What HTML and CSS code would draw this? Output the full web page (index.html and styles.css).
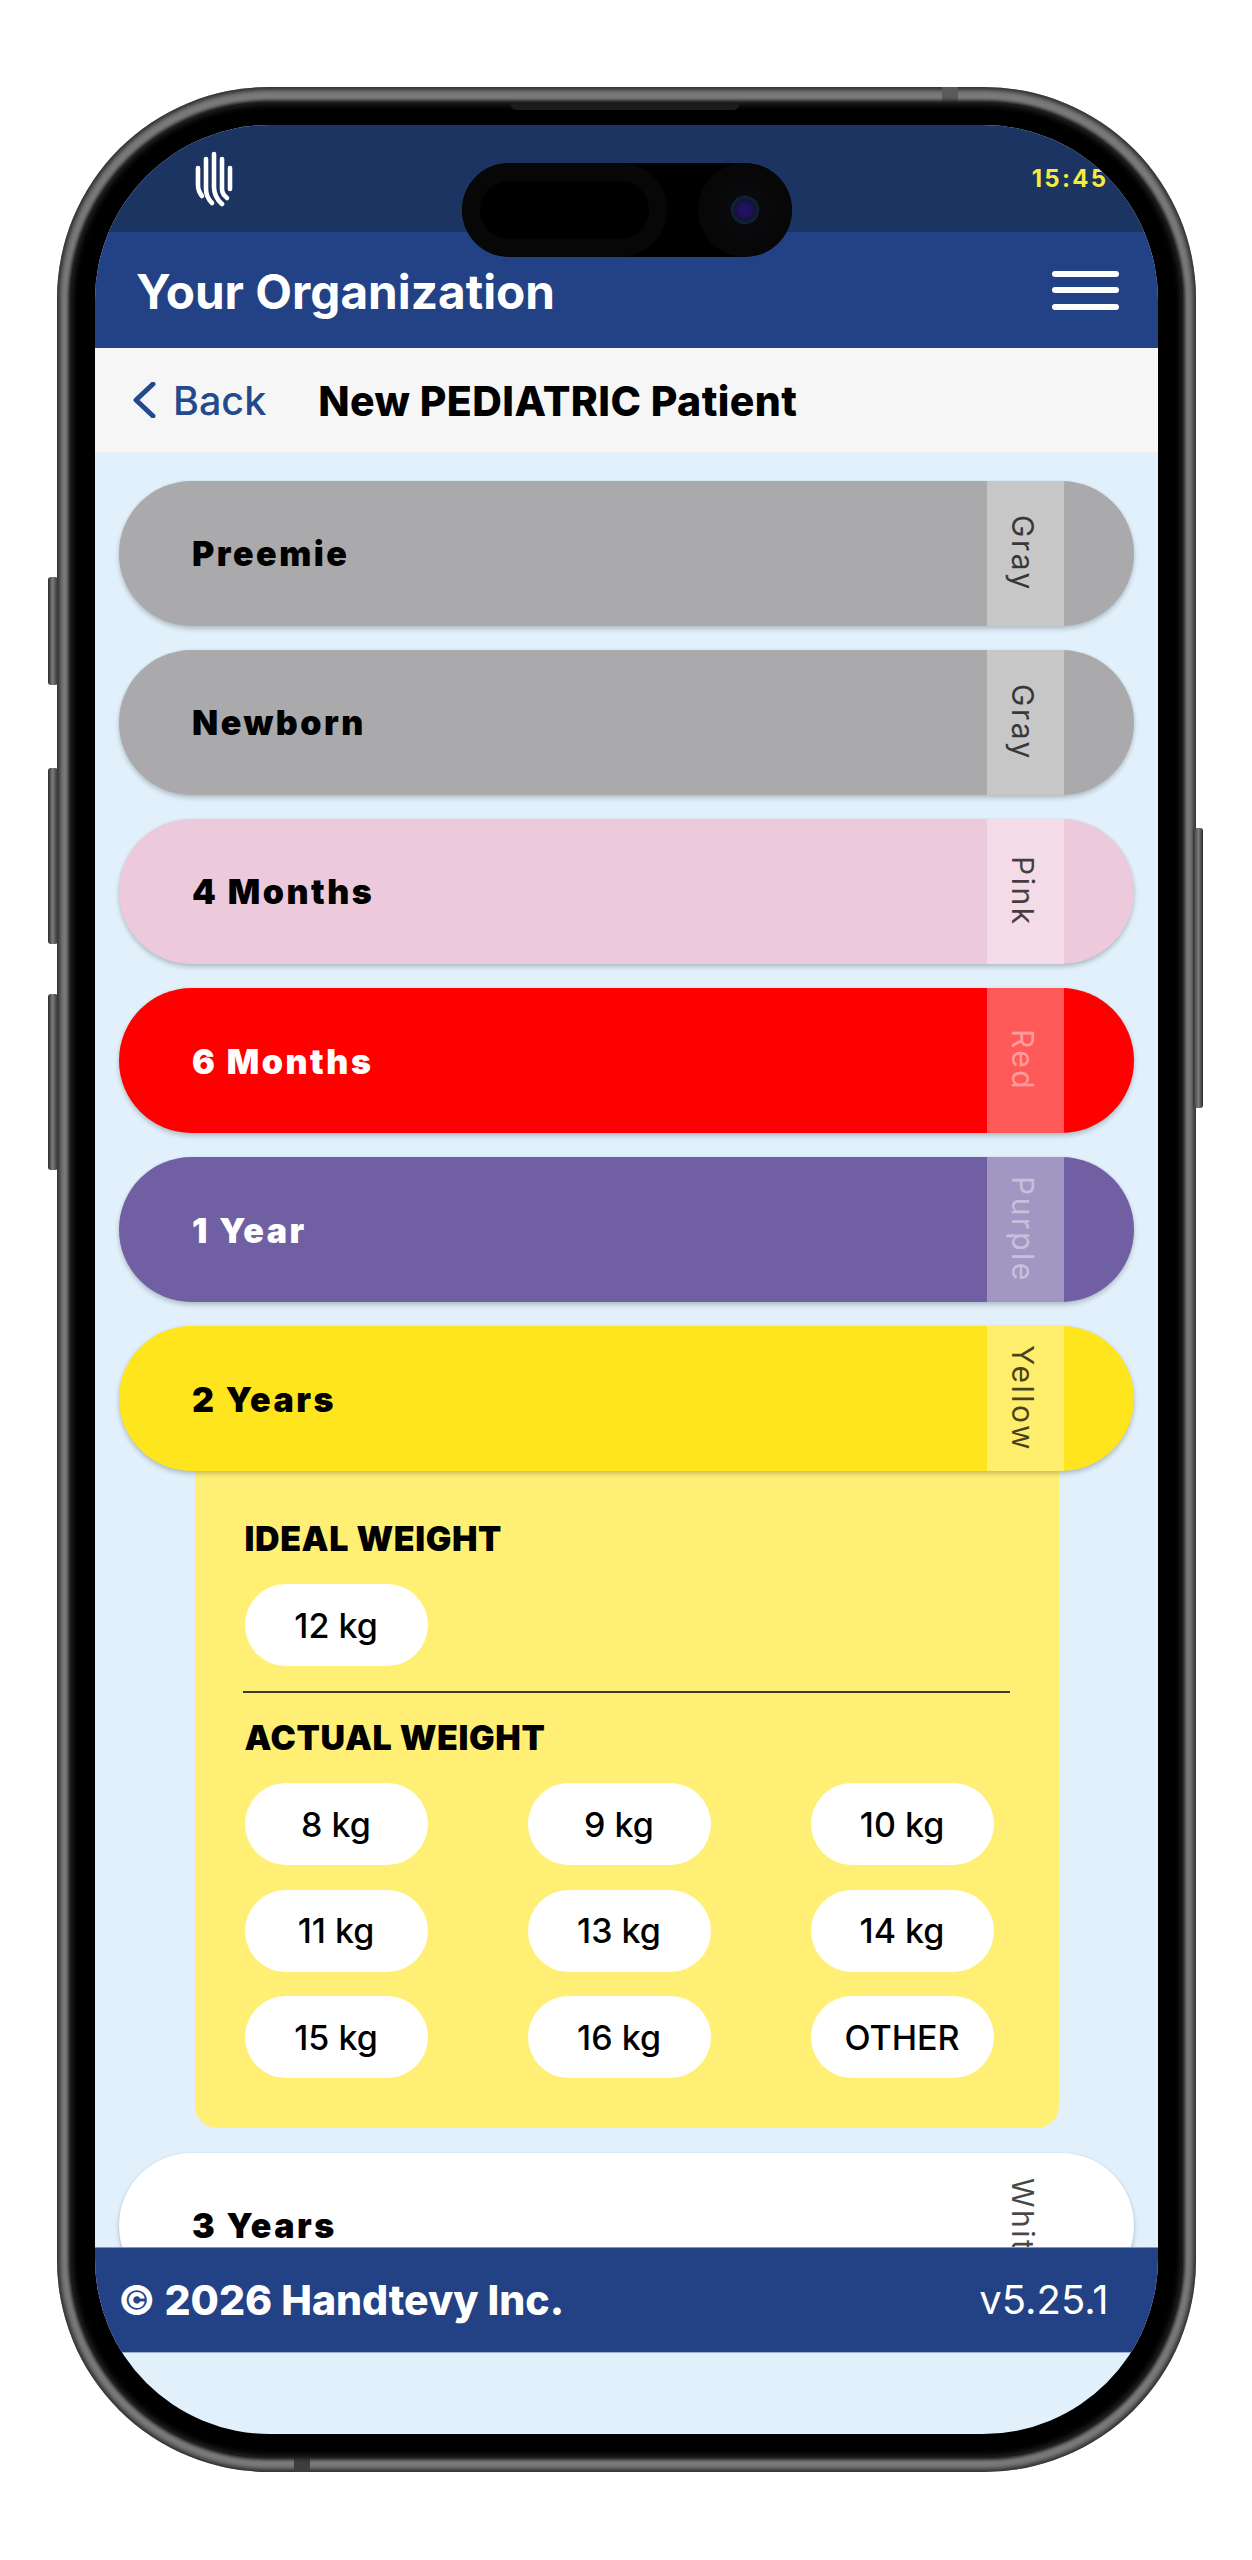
FILE: index.html
```html
<!DOCTYPE html>
<html lang="en">
<head>
<meta charset="utf-8">
<title>Your Organization</title>
<link rel="stylesheet" href="styles.css">
</head>
<body>
<div class="phone">
  <span class="side-btn left b1"></span>
  <span class="side-btn left b2"></span>
  <span class="side-btn left b3"></span>
  <span class="side-btn right b4"></span>
  <span class="band band-top"></span>
  <span class="band band-bottom"></span>
  <div class="bezel">
    <span class="speaker"></span>
    <div class="screen">
      <div class="status">
        <svg class="logo" viewBox="0 0 38 56" aria-hidden="true">
          <g fill="none" stroke="#fff" stroke-width="4.6" stroke-linecap="round">
            <path d="M3 17V34Q3 40 7 45"/>
            <path d="M11 8V38Q11 46 17 52"/>
            <path d="M19 3V36Q19 46 27 53"/>
            <path d="M27 8V38Q27 43 32 47"/>
            <path d="M35 17V38"/>
          </g>
        </svg>
        <span class="time">15:45</span>
      </div>
      <header class="app-head">
        <span class="org">Your Organization</span>
        <span class="burger"><i></i><i></i><i></i></span>
      </header>
      <div class="subbar">
        <svg class="chev" viewBox="0 0 24 36" aria-hidden="true"><path d="M21 2L4 18L21 34" fill="none" stroke="#234a8c" stroke-width="5" stroke-linecap="round" stroke-linejoin="round"/></svg>
        <span class="back">Back</span>
        <span class="page-title">New PEDIATRIC Patient</span>
      </div>
      <main class="list">
        <div class="pill gray"><span class="age">Preemie</span><span class="tag"><span class="tag-text">Gray</span></span></div>
        <div class="pill gray"><span class="age">Newborn</span><span class="tag"><span class="tag-text">Gray</span></span></div>
        <div class="pill pink"><span class="age">4 Months</span><span class="tag"><span class="tag-text">Pink</span></span></div>
        <div class="pill red"><span class="age">6 Months</span><span class="tag"><span class="tag-text">Red</span></span></div>
        <div class="pill purple"><span class="age">1 Year</span><span class="tag"><span class="tag-text">Purple</span></span></div>
        <div class="group">
          <div class="pill yellow"><span class="age">2 Years</span><span class="tag"><span class="tag-text">Yellow</span></span></div>
          <section class="panel">
            <h3 class="weight-title">IDEAL WEIGHT</h3>
            <div class="weights">
              <span class="kg">12 kg</span>
            </div>
            <hr class="rule">
            <h3 class="weight-title">ACTUAL WEIGHT</h3>
            <div class="weights">
              <span class="kg">8 kg</span><span class="kg">9 kg</span><span class="kg">10 kg</span>
              <span class="kg">11 kg</span><span class="kg">13 kg</span><span class="kg">14 kg</span>
              <span class="kg">15 kg</span><span class="kg">16 kg</span><span class="kg">OTHER</span>
            </div>
          </section>
        </div>
        <div class="pill white"><span class="age">3 Years</span><span class="tag"><span class="tag-text">White</span></span></div>
      </main>
      <footer class="foot">
        <span class="copy">© 2026 Handtevy Inc.</span>
        <span class="ver">v5.25.1</span>
      </footer>
      <div class="foot-fill"></div>
    </div>
    <div class="island">
      <span class="isl-left"></span>
      <span class="isl-cam"><span class="lens"></span></span>
    </div>
  </div>
</div>
</body>
</html>
```
FILE: styles.css
```css
* { box-sizing: border-box; }
html, body { margin: 0; padding: 0; background: #fff; }
body { height: 2560px; padding: 87px 0 0 57px; font-family: Inter, "Liberation Sans", sans-serif; overflow: hidden; }

.phone {
  position: relative;
  width: 1139px;
  height: 2385px;
  padding: 15px 13px 14px 13px;
  border-radius: 212px;
  background: #7a7a7a;
  box-shadow: inset 0 0 4px 3px #2e2e2e;
}
.side-btn { position: absolute; width: 10px; background: linear-gradient(90deg, #2a2a2a, #7c7c7c 45%, #333); border-radius: 3px; }
.side-btn.left { left: -9px; }
.side-btn.right { right: -7px; background: linear-gradient(270deg, #2a2a2a, #7c7c7c 45%, #333); }
.b1 { top: 490px; height: 108px; }
.b2 { top: 681px; height: 176px; }
.b3 { top: 907px; height: 176px; }
.b4 { top: 741px; height: 280px; }
.band { position: absolute; width: 16px; height: 15px; background: #5a5a5a; }
.band-top { top: 0; left: 885px; }
.band-bottom { bottom: 0; left: 237px; background: #3e3e3e; }

.bezel {
  position: relative;
  height: 100%;
  padding: 23px 25.5px 24px 24.5px;
  border-radius: 199px;
  background: #000;
  box-shadow: 0 0 3px 2px #262626, inset 0 0 6px 2px #2c2c2c;
}
.speaker { position: absolute; top: 0; left: 441px; width: 228px; height: 8px; border-radius: 0 0 5px 5px; background: #1c1c1c; }

.screen {
  display: flex;
  flex-direction: column;
  height: 100%;
  overflow: hidden;
  border-radius: 175px;
  background: #e1f0fb;
}
.status {
  flex: 0 0 107px;
  display: flex;
  align-items: center;
  justify-content: space-between;
  padding: 0 49px 0 100.5px;
  background: #1b3461;
}
.logo { width: 38px; height: 56px; display: block; }
.time { color: #f6ea3a; font-size: 24px; line-height: 24px; font-weight: 700; letter-spacing: 2.3px; }

.app-head {
  flex: 0 0 116px;
  display: flex;
  align-items: center;
  justify-content: space-between;
  padding: 0 38.5px 0 41.5px;
  background: #234286;
}
.org { color: #fff; font-size: 47.7px; line-height: 56px; font-weight: 700; padding-top: 3px; }
.burger { display: flex; flex-direction: column; gap: 10.5px; width: 67px; }
.burger i { display: block; height: 6px; border-radius: 3px; background: #fff; }

.subbar {
  flex: 0 0 106px;
  display: flex;
  align-items: center;
  padding-left: 37.5px;
  background: #f6f6f6;
  border-bottom: 2px solid #eeeeee;
}
.chev { width: 24px; height: 36px; display: block; }
.back { margin-left: 17px; color: #234a8c; font-size: 39.5px; line-height: 46px; font-weight: 500; padding-top: 1px; }
.page-title { margin-left: 52px; color: #000; font-size: 41px; line-height: 46px; font-weight: 800; letter-spacing: .4px; padding-top: 1px; }

.list {
  flex: 1 1 auto;
  min-height: 0;
  overflow: hidden;
  display: flex;
  flex-direction: column;
  gap: 24.2px;
  padding: 26.5px 24px 0;
}
.group { display: flex; flex-direction: column; }
.pill {
  position: relative;
  z-index: 1;
  flex: 0 0 145px;
  display: flex;
  justify-content: space-between;
  align-items: stretch;
  padding: 0 70px 0 73.5px;
  border-radius: 73px;
  box-shadow: 0 3px 5px rgba(0, 0, 0, .2), 0 0 3px rgba(60, 90, 120, .07);
  color: #000;
}
.age { align-self: center; font-size: 34px; line-height: 40px; font-weight: 900; letter-spacing: 2.5px; padding-top: 2px; }
.tag { flex: 0 0 77px; display: flex; align-items: center; justify-content: center; padding-right: 5px; background: rgba(255, 255, 255, .35); }
.tag-text { writing-mode: vertical-rl; font-size: 30px; line-height: 36px; letter-spacing: 2.5px; color: rgba(0, 0, 0, .72); }
.gray { background: #aaa9ab; }
.pink { background: #edcadb; }
.red { background: #f00; color: #fff; }
.purple { background: #705fa2; color: #fff; }
.yellow { background: #ffe51e; }
.white { background: #fff; }
.red .tag-text, .purple .tag-text { color: rgba(255, 255, 255, .42); }

.panel {
  margin: 0 75px 0 76px;
  padding: 48px 50px 50px;
  border-radius: 0 0 22px 22px;
  background: #fff075;
}
.weight-title { margin: 0 0 25px; font-size: 34px; line-height: 40px; font-weight: 900; color: #000; letter-spacing: .6px; }
.weights { display: grid; grid-template-columns: repeat(3, 183px); column-gap: 100px; row-gap: 24.5px; }
.kg {
  height: 82px;
  display: flex;
  align-items: center;
  justify-content: center;
  border-radius: 41px;
  background: #fff;
  color: #000;
  font-size: 34px;
  font-weight: 500;
}
.rule { height: 2px; margin: 25px 0 25px -2px; width: 767px; border: 0; background: #3c3a20; }

.foot {
  flex: 0 0 106px;
  display: flex;
  align-items: center;
  justify-content: space-between;
  padding: 0 49px 0 23.5px;
  background: #234286;
  color: #fff;
  border-top: 1px solid #7f93bb;
  border-bottom: 1px solid #9db0cf;
}
.copy { font-size: 41px; line-height: 50px; font-weight: 800; }
.ver { font-size: 40px; line-height: 46px; }
.foot-fill { flex: 0 0 81px; }

.island {
  position: absolute;
  top: 61px;
  left: 392px;
  width: 330px;
  height: 94px;
  border-radius: 47px;
  background: #000;
  overflow: hidden;
}
.isl-left { position: absolute; left: 0; top: 0; width: 205px; height: 94px; border: 18px solid #070707; border-radius: 47px; }
.isl-cam { position: absolute; right: 0; top: 0; width: 94px; height: 94px; display: flex; align-items: center; justify-content: center; border-radius: 50%; background: radial-gradient(circle, #0a0a0e 0 30%, #070707 55%); }
.lens { width: 26px; height: 26px; border-radius: 50%; background: radial-gradient(circle, #20125e 0 30%, #141238 55%, #0c2a33 75%, #08080c 100%); box-shadow: 0 0 0 1px #0f3038; }
```
